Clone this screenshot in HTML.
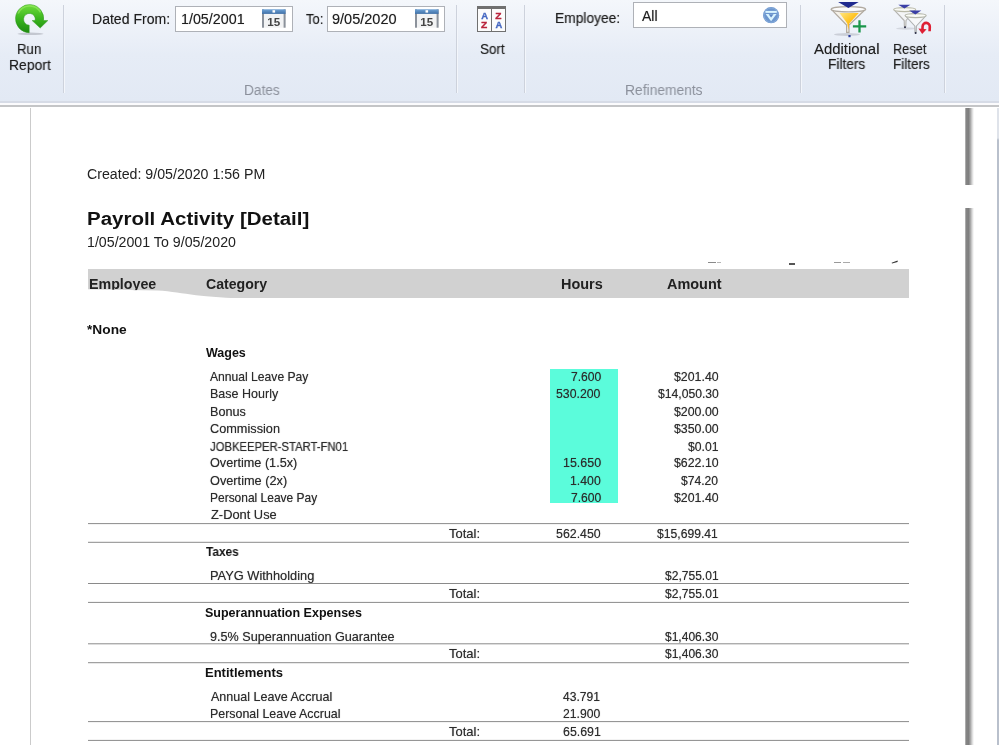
<!DOCTYPE html>
<html>
<head>
<meta charset="utf-8">
<title>Payroll Activity [Detail]</title>
<style>
html,body{margin:0;padding:0;}
body{width:999px;height:745px;overflow:hidden;background:#fff;position:relative;font-family:"Liberation Sans",sans-serif;color:#1a1a1a;}
.t{position:absolute;white-space:nowrap;line-height:1;will-change:transform;transform-origin:0 0;}
svg{will-change:transform;}
.ab{position:absolute;}
/* toolbar */
#bar{left:0;top:0;width:999px;height:101px;background:linear-gradient(#f4f7fb 0px,#eef2f9 25px,#e6ecf6 55px,#e2e9f4 101px);}
#bb1{left:0;top:101px;width:999px;height:2px;background:#d6dbe6;}
#bb2{left:0;top:103px;width:999px;height:2px;background:#fbfbfd;}
#bb3{left:0;top:105px;width:999px;height:2px;background:#c4c5c7;}
.sep{position:absolute;top:5px;width:1px;height:88px;background:#cdd2dc;box-shadow:1px 0 0 #f3f6fb;}
.ui{color:#1e1e1e;text-shadow:0 0 0.8px rgba(30,30,30,.45);}
.grp{color:#8b909b;}
.inp{position:absolute;background:#fff;border:1px solid #aeb1b7;box-sizing:border-box;}
/* document */
#pl{left:30px;top:108px;width:1px;height:637px;background:#cbcbcb;}
.sh{position:absolute;left:965px;width:9px;background:linear-gradient(90deg,#c4c4c4 0,#858585 14%,#7f7f7f 40%,#a6a6a6 60%,#dadada 80%,#fff 100%);}
#re{left:997px;top:108px;width:2px;height:637px;background:linear-gradient(#dfe3ea 0,#dfe3ea 30px,#b9c0cc 32px,#b9c0cc 100%);}
.a{color:#222;}
.ttl{color:#111;font-weight:bold;}
.hb{color:#222;font-weight:bold;}
.s{color:#2c2c2c;text-shadow:0 0 0.8px rgba(30,30,30,.55);}
.sb{color:#111;font-weight:bold;}
.hl{position:absolute;left:88px;width:821px;height:1px;background:#8e8e8e;}
#hdr{left:88px;top:269px;width:821px;height:29px;background:#d1d1d1;}
#cy{left:550px;top:369px;width:68px;height:134px;background:#5bfcdb;}
</style>
</head>
<body>
<!-- toolbar chrome -->
<div id="bar" class="ab"></div><div id="bb1" class="ab"></div><div id="bb2" class="ab"></div><div id="bb3" class="ab"></div>
<div class="sep" style="left:63px"></div>
<div class="sep" style="left:456px"></div>
<div class="sep" style="left:524px"></div>
<div class="sep" style="left:800px"></div>
<div class="sep" style="left:944px"></div>

<!-- run report icon -->
<svg class="ab" style="left:12px;top:2px" width="40" height="36" viewBox="12 2 40 36">
  <defs>
    <linearGradient id="g1" x1="0" y1="0" x2="0" y2="1"><stop offset="0" stop-color="#6fdc3c"/><stop offset="0.5" stop-color="#3bb51e"/><stop offset="1" stop-color="#1d8a10"/></linearGradient>
  </defs>
  <ellipse cx="30.5" cy="33.8" rx="13" ry="1.3" fill="#b9bdc6" opacity="0.8"/>
  <path d="M29.2 32.8 A14.1 14.1 0 1 1 43.6 20.6 L47.8 20.6 L40.2 28 L32.2 20.6 L35.2 20.6 A5.9 5.9 0 1 0 29.2 25.2 Z" fill="url(#g1)" stroke="#2b9418" stroke-width="0.5"/>
  <path d="M18.2 13.5 A12.4 12.4 0 0 1 40.6 12.4" fill="none" stroke="#9fee6a" stroke-width="1.6" opacity="0.55"/>
</svg>

<!-- date inputs -->
<div class="inp" style="left:175px;top:6px;width:118px;height:26px"></div>
<div class="inp" style="left:327px;top:6px;width:118px;height:26px"></div>
<!-- calendar icons -->
<svg class="ab" style="left:262px;top:9px" width="24" height="20" viewBox="0 0 24 20">
  <defs><linearGradient id="cb" x1="0" y1="0" x2="0" y2="1"><stop offset="0" stop-color="#6fa3d6"/><stop offset="1" stop-color="#3f6fa6"/></linearGradient></defs>
  <rect x="0" y="0.3" width="23.6" height="18.4" fill="#f2f3f4"/>
  <rect x="0" y="0.3" width="2" height="18.4" fill="#8c929b"/>
  <rect x="21.6" y="0.3" width="2" height="18.4" fill="#8c929b"/>
  <rect x="0" y="0.3" width="23.6" height="4.6" fill="url(#cb)"/>
  <rect x="10.5" y="1.2" width="2.6" height="2.4" fill="#fff"/>
  <text x="11.8" y="17" font-family="Liberation Sans" font-weight="bold" font-size="11.6" fill="#454545" text-anchor="middle">15</text>
</svg>
<svg class="ab" style="left:414.5px;top:9px" width="24" height="20" viewBox="0 0 24 20">
  <rect x="0" y="0.3" width="23.6" height="18.4" fill="#f2f3f4"/>
  <rect x="0" y="0.3" width="2" height="18.4" fill="#8c929b"/>
  <rect x="21.6" y="0.3" width="2" height="18.4" fill="#8c929b"/>
  <rect x="0" y="0.3" width="23.6" height="4.6" fill="url(#cb)"/>
  <rect x="10.5" y="1.2" width="2.6" height="2.4" fill="#fff"/>
  <text x="11.8" y="17" font-family="Liberation Sans" font-weight="bold" font-size="11.6" fill="#454545" text-anchor="middle">15</text>
</svg>

<!-- sort icon -->
<svg class="ab" style="left:476px;top:5px" width="31" height="28" viewBox="476 5 31 28">
  <rect x="477" y="6" width="29" height="26" fill="#707070"/>
  <rect x="478" y="9" width="13" height="22" fill="#fcfcfc"/>
  <rect x="492" y="9" width="13" height="22" fill="#fcfcfc"/>
  <g font-family="Liberation Sans" font-weight="bold" font-size="9.3" text-anchor="middle" stroke-width="0.35">
    <text x="484.6" y="18.7" fill="#4668c2" stroke="#4668c2" textLength="6.8" lengthAdjust="spacingAndGlyphs">A</text>
    <text x="484.2" y="28.2" fill="#b9243c" stroke="#b9243c" textLength="6.2" lengthAdjust="spacingAndGlyphs">Z</text>
    <text x="498.4" y="18.7" fill="#b9243c" stroke="#b9243c" textLength="6.2" lengthAdjust="spacingAndGlyphs">Z</text>
    <text x="499" y="28.2" fill="#4668c2" stroke="#4668c2" textLength="6.8" lengthAdjust="spacingAndGlyphs">A</text>
  </g>
</svg>

<!-- employee dropdown -->
<div class="inp" style="left:633px;top:2px;width:154px;height:26px"></div>
<svg class="ab" style="left:762px;top:6px" width="19" height="19" viewBox="762 6 19 19">
  <circle cx="771.1" cy="15.2" r="8.1" fill="#6c96cf"/>
  <circle cx="771.1" cy="15.2" r="7.2" fill="none" stroke="#86abd9" stroke-width="1"/>
  <path d="M765.4 10.9 H776.8 V12.9 H765.4 Z" fill="#d9f4ff"/>
  <path d="M765.6 13.9 L776.6 13.9 L771.1 21.3 Z" fill="#d9f4ff"/>
  <path d="M768.6 14.3 L773.6 14.3 L771.1 17.4 Z" fill="#5d86c4"/>
</svg>

<!-- additional filters icon -->
<svg class="ab" style="left:826px;top:0px" width="46" height="40" viewBox="826 0 46 40">
  <defs>
    <linearGradient id="fy" x1="0" y1="0" x2="1" y2="1"><stop offset="0" stop-color="#ffe680"/><stop offset="0.5" stop-color="#ffc21f"/><stop offset="1" stop-color="#ff9408"/></linearGradient>
  </defs>
  <ellipse cx="847" cy="34.5" rx="13" ry="1.4" fill="#c3c7d0" opacity="0.8"/>
  <path d="M831.3 9.3 L846.6 25 L846.6 32.4 L849 32.4 L849 25 L865.6 9.3 Z" fill="#f6f2ea" stroke="#b1aaa0" stroke-width="1.2" stroke-linejoin="round"/>
  <path d="M839.5 13 L858.8 13 L849.2 23.4 L848.4 30 L847.3 23.6 Z" fill="url(#fy)"/>
  <ellipse cx="848.4" cy="9.3" rx="17.2" ry="2.6" fill="#fbfbfb" stroke="#b1aaa0" stroke-width="1.2"/>
  <path d="M838.1 2.1 L858.7 2.1 L848.4 8 Z" fill="#1f2a8e"/>
  <rect x="848.4" y="35" width="2.2" height="2.2" fill="#2a3c9a"/>
  <path d="M852.9 26.4 H866.2 M859.5 20.2 V32.6" stroke="#1a964a" stroke-width="2.3" fill="none"/>
</svg>

<!-- reset filters icon -->
<svg class="ab" style="left:888px;top:0px" width="48" height="40" viewBox="888 0 48 40">
  <ellipse cx="906" cy="28.5" rx="10" ry="1.2" fill="#c9ccd4" opacity="0.7"/>
  <path d="M893.8 9.6 L904.2 20.5 L904.4 26.4 L905.8 26.4 L906 20.5 L915.6 9.6" fill="#f4f5f7" stroke="#b4b3b0" stroke-width="1.1" stroke-linejoin="round"/>
  <ellipse cx="904.7" cy="9.6" rx="11" ry="2" fill="#f8f9f4" stroke="#b9b9a8" stroke-width="1.1"/>
  <path d="M898.3 4.8 L910.4 4.8 L904.4 8.6 Z" fill="#3a3ea6"/>
  <circle cx="905" cy="27.2" r="1" fill="#2a2c44"/>
  <path d="M905.2 15.6 L914.8 26 L915 32.2 L916.2 32.2 L916.4 26 L926 15.6" fill="#f7f8fa" stroke="#aeb0b0" stroke-width="1.1" stroke-linejoin="round"/>
  <ellipse cx="915.6" cy="15.6" rx="10.6" ry="2" fill="#fafbf6" stroke="#b4b6aa" stroke-width="1.1"/>
  <path d="M909.2 10.6 L921.3 10.6 L915.3 14.6 Z" fill="#3a3ea6"/>
  <circle cx="915.6" cy="33" r="1" fill="#2a2c44"/>
  <path d="M929.6 31.2 L929.8 26.6 A3.6 3.6 0 0 0 922.6 26.4 L922.4 30.6" fill="none" stroke="#de2034" stroke-width="2.6"/>
  <path d="M918.4 28.6 L926.6 29.2 L922.2 34 Z" fill="#de2034"/>
</svg>

<!-- document chrome -->
<div id="pl" class="ab"></div>
<div class="sh" style="top:108px;height:77px"></div>
<div class="sh" style="top:208px;height:537px"></div>
<div id="re" class="ab"></div>

<div id="hdr" class="ab"></div>
<div id="cy" class="ab"></div>
<!-- specks above header -->
<div class="ab" style="left:708px;top:262px;width:8px;height:1px;background:#8a8a8a"></div>
<div class="ab" style="left:717px;top:262px;width:4px;height:1px;background:#b5b5b5"></div>
<div class="ab" style="left:789px;top:263px;width:6px;height:1.5px;background:#555"></div>
<div class="ab" style="left:834px;top:262px;width:7px;height:1px;background:#999"></div>
<div class="ab" style="left:843px;top:262px;width:7px;height:1px;background:#aaa"></div>
<svg class="ab" style="left:890px;top:259px" width="9" height="6" viewBox="0 0 9 6"><path d="M1.6 3.8 L7.6 1.6 L7.6 3 L2 4.6 Z" fill="#333"/></svg>

<!-- rule lines -->
<div class="hl" style="top:523px;height:2px;background:linear-gradient(#969696 50%,#f3f3f3 50%)"></div>
<div class="hl" style="top:541px;height:2px;background:linear-gradient(#e8e8e8 50%,#a1a1a1 50%)"></div>
<div class="hl" style="top:583px;height:2px;background:linear-gradient(#8a8a8a 50%,#ffffff 50%)"></div>
<div class="hl" style="top:601px;height:2px;background:linear-gradient(#f3f3f3 50%,#969696 50%)"></div>
<div class="hl" style="top:643px;height:2px;background:linear-gradient(#adadad 50%,#dcdcdc 50%)"></div>
<div class="hl" style="top:662px;height:2px;background:linear-gradient(#a1a1a1 50%,#e8e8e8 50%)"></div>
<div class="hl" style="top:721px;height:2px;background:linear-gradient(#969696 50%,#f3f3f3 50%)"></div>
<div class="hl" style="top:739px;height:2px;background:linear-gradient(#f3f3f3 50%,#969696 50%)"></div>

<!-- text -->
<span class="t ui" style="left:16.52px;top:42px;font-size:14px;transform:scaleX(0.9429)">Run</span>
<span class="t ui" style="left:8.52px;top:58px;font-size:14px;transform:scaleX(0.9920)">Report</span>
<span class="t ui" style="left:92.36px;top:12px;font-size:14px;transform:scaleX(1.0032)">Dated From:</span>
<span class="t ui" style="left:180.73px;top:12px;font-size:14px;transform:scaleX(1.0210)">1/05/2001</span>
<span class="t ui" style="left:305.61px;top:12px;font-size:14px;transform:scaleX(0.9290)">To:</span>
<span class="t ui" style="left:332.04px;top:12px;font-size:14px;transform:scaleX(1.0368)">9/05/2020</span>
<span class="t grp" style="left:243.68px;top:83px;font-size:14px;transform:scaleX(0.9779)">Dates</span>
<span class="t ui" style="left:479.68px;top:42px;font-size:14px;transform:scaleX(0.9641)">Sort</span>
<span class="t ui" style="left:554.68px;top:11px;font-size:14px;transform:scaleX(0.9844)">Employee:</span>
<span class="t ui" style="left:642.33px;top:9px;font-size:14px;transform:scaleX(1.0014)">All</span>
<span class="t grp" style="left:625.15px;top:83px;font-size:14px;transform:scaleX(0.9870)">Refinements</span>
<span class="t ui" style="left:814.22px;top:42px;font-size:14px;transform:scaleX(1.0644)">Additional</span>
<span class="t ui" style="left:828.15px;top:57px;font-size:14px;transform:scaleX(0.9784)">Filters</span>
<span class="t ui" style="left:893.10px;top:42px;font-size:14px;transform:scaleX(0.9106)">Reset</span>
<span class="t ui" style="left:892.52px;top:57px;font-size:14px;transform:scaleX(0.9645)">Filters</span>
<span class="t a" style="left:87.00px;top:167px;font-size:14px;transform:scaleX(1.0133)">Created: 9/05/2020 1:56 PM</span>
<span class="t ttl" style="left:86.54px;top:209px;font-size:19.2px;transform:scaleX(1.0674)">Payroll Activity [Detail]</span>
<span class="t a" style="left:87.10px;top:235px;font-size:14px;transform:scaleX(1.0141)">1/05/2001 To 9/05/2020</span>
<span class="t hb" style="left:89.15px;top:277px;font-size:14px;transform:scaleX(1.0173)">Employee</span>
<span class="t hb" style="left:206.47px;top:277px;font-size:14px;transform:scaleX(1.0087)">Category</span>
<span class="t hb" style="left:561.36px;top:277px;font-size:14px;transform:scaleX(1.0309)">Hours</span>
<span class="t hb" style="left:667.38px;top:277px;font-size:14px;transform:scaleX(1.0323)">Amount</span>
<span class="t sb" style="left:87.38px;top:324px;font-size:12.5px;transform:scaleX(1.0978)">*None</span>
<span class="t sb" style="left:206.00px;top:347px;font-size:12.5px;transform:scaleX(0.9968)">Wages</span>
<span class="t s" style="left:210.42px;top:372px;font-size:11.9px;transform:scaleX(1.0195)">Annual Leave Pay</span>
<span class="t s" style="left:570.51px;top:372px;font-size:11.9px;transform:scaleX(1.0169)">7.600</span>
<span class="t s" style="left:674.35px;top:372px;font-size:11.9px;transform:scaleX(1.0377)">$201.40</span>
<span class="t s" style="left:209.52px;top:389px;font-size:11.9px;transform:scaleX(1.0530)">Base Hourly</span>
<span class="t s" style="left:556.04px;top:389px;font-size:11.9px;transform:scaleX(1.0326)">530.200</span>
<span class="t s" style="left:657.79px;top:389px;font-size:11.9px;transform:scaleX(1.0229)">$14,050.30</span>
<span class="t s" style="left:209.52px;top:407px;font-size:11.9px;transform:scaleX(1.0633)">Bonus</span>
<span class="t s" style="left:674.35px;top:407px;font-size:11.9px;transform:scaleX(1.0377)">$200.00</span>
<span class="t s" style="left:209.69px;top:424px;font-size:11.9px;transform:scaleX(1.0700)">Commission</span>
<span class="t s" style="left:674.35px;top:424px;font-size:11.9px;transform:scaleX(1.0377)">$350.00</span>
<span class="t s" style="left:210.17px;top:442px;font-size:11.9px;transform:scaleX(0.9489)">JOBKEEPER-START-FN01</span>
<span class="t s" style="left:688.37px;top:442px;font-size:11.9px;transform:scaleX(1.0235)">$0.01</span>
<span class="t s" style="left:209.89px;top:458px;font-size:11.9px;transform:scaleX(1.0652)">Overtime (1.5x)</span>
<span class="t s" style="left:563.10px;top:458px;font-size:11.9px;transform:scaleX(1.0480)">15.650</span>
<span class="t s" style="left:674.35px;top:458px;font-size:11.9px;transform:scaleX(1.0377)">$622.10</span>
<span class="t s" style="left:209.87px;top:476px;font-size:11.9px;transform:scaleX(1.0716)">Overtime (2x)</span>
<span class="t s" style="left:570.10px;top:476px;font-size:11.9px;transform:scaleX(1.0323)">1.400</span>
<span class="t s" style="left:681.21px;top:476px;font-size:11.9px;transform:scaleX(1.0200)">$74.20</span>
<span class="t s" style="left:209.52px;top:493px;font-size:11.9px;transform:scaleX(1.0066)">Personal Leave Pay</span>
<span class="t s" style="left:570.51px;top:493px;font-size:11.9px;transform:scaleX(1.0169)">7.600</span>
<span class="t s" style="left:674.35px;top:493px;font-size:11.9px;transform:scaleX(1.0377)">$201.40</span>
<span class="t s" style="left:210.63px;top:510px;font-size:11.9px;transform:scaleX(1.0810)">Z-Dont Use</span>
<span class="t s" style="left:449.48px;top:529px;font-size:11.9px;transform:scaleX(1.0924)">Total:</span>
<span class="t s" style="left:555.81px;top:529px;font-size:11.9px;transform:scaleX(1.0401)">562.450</span>
<span class="t s" style="left:657.42px;top:529px;font-size:11.9px;transform:scaleX(1.0209)">$15,699.41</span>
<span class="t sb" style="left:206.00px;top:546px;font-size:12.5px;transform:scaleX(0.9497)">Taxes</span>
<span class="t s" style="left:209.89px;top:571px;font-size:11.9px;transform:scaleX(1.0781)">PAYG Withholding</span>
<span class="t s" style="left:664.81px;top:571px;font-size:11.9px;transform:scaleX(1.0128)">$2,755.01</span>
<span class="t s" style="left:449.48px;top:589px;font-size:11.9px;transform:scaleX(1.0924)">Total:</span>
<span class="t s" style="left:664.81px;top:589px;font-size:11.9px;transform:scaleX(1.0128)">$2,755.01</span>
<span class="t sb" style="left:205.17px;top:607px;font-size:12.5px;transform:scaleX(0.9989)">Superannuation Expenses</span>
<span class="t s" style="left:210.12px;top:632px;font-size:11.9px;transform:scaleX(1.0619)">9.5% Superannuation Guarantee</span>
<span class="t s" style="left:664.81px;top:632px;font-size:11.9px;transform:scaleX(1.0104)">$1,406.30</span>
<span class="t s" style="left:449.48px;top:649px;font-size:11.9px;transform:scaleX(1.0924)">Total:</span>
<span class="t s" style="left:664.81px;top:649px;font-size:11.9px;transform:scaleX(1.0104)">$1,406.30</span>
<span class="t sb" style="left:205.10px;top:667px;font-size:12.5px;transform:scaleX(1.0399)">Entitlements</span>
<span class="t s" style="left:210.74px;top:692px;font-size:11.9px;transform:scaleX(1.0548)">Annual Leave Accrual</span>
<span class="t s" style="left:563.35px;top:692px;font-size:11.9px;transform:scaleX(1.0159)">43.791</span>
<span class="t s" style="left:209.89px;top:709px;font-size:11.9px;transform:scaleX(1.0442)">Personal Leave Accrual</span>
<span class="t s" style="left:563.07px;top:709px;font-size:11.9px;transform:scaleX(1.0223)">21.900</span>
<span class="t s" style="left:449.48px;top:727px;font-size:11.9px;transform:scaleX(1.0924)">Total:</span>
<span class="t s" style="left:562.90px;top:727px;font-size:11.9px;transform:scaleX(1.0418)">65.691</span>
<!-- white smear over header bottom-left -->
<svg class="ab" style="left:86px;top:286px" width="160" height="14" viewBox="86 286 160 14">
  <path d="M86 289.2 L157 290.6 C172 291.4 182 293.6 196 295.2 C210 296.8 222 297.6 236 298.2 L236 300 L86 300 Z" fill="#fff"/>
</svg>

</body>
</html>
